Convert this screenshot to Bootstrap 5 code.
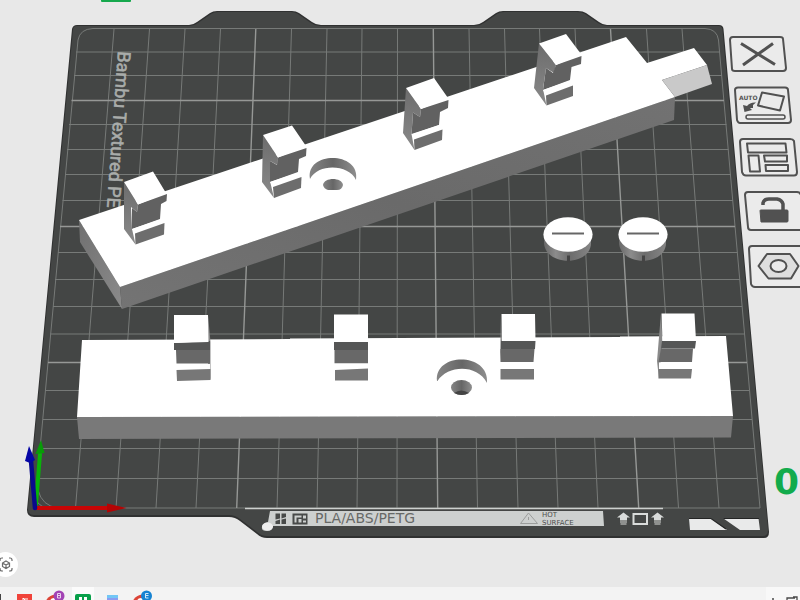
<!DOCTYPE html>
<html lang="en">
<head>
<meta charset="utf-8">
<meta name="viewport" content="width=device-width, initial-scale=1">
<title>Build plate</title>
<link href="https://cdn.jsdelivr.net/npm/bootstrap@5.3.0/dist/css/bootstrap.min.css" rel="stylesheet">
<style>
  body { background: #e8e8e8; font-family: "Liberation Sans", Arial, sans-serif; }
  .plate-name { font: 400 18px Roboto, "Liberation Sans", sans-serif; fill: #a9acaa; stroke: #a9acaa; stroke-width: 0.6; }
  .plate-types { font: 14px "DejaVu Sans", sans-serif; fill: #676967; }
  .plate-warning { font: 7px "DejaVu Sans", sans-serif; fill: #4d4f4d; }
  .plate-number { font: 700 36px "DejaVu Sans", sans-serif; fill: #12ab4c; }
  .auto-label { font: 700 6px "DejaVu Sans", sans-serif; fill: #555; stroke: none; }
  .plate-tools { width: 9.25%; padding-top: 3.75%; }
  .tool-icon { fill: none; stroke: #515151; stroke-width: 2; stroke-linejoin: round; }
  .view-btn { width: 25px; height: 25px; left: -7px; bottom: 10px; }
  .taskbar { height: 13px; background: #f3f3f3; }
  .task-btn { width: 29px; height: 13px; }
  .task-btn svg { overflow: visible; }
  .tray { width: 34px; height: 13px; background: #f8f8f8; }
</style>
<script src="https://cdn.jsdelivr.net/npm/bootstrap@5.3.0/dist/js/bootstrap.bundle.min.js"></script>
</head>
<body class="d-flex flex-column min-vh-100 overflow-hidden">
<main class="position-relative overflow-hidden">
  <svg class="d-block w-100" viewBox="0 0 800 587" role="img" aria-label="Build plate with two rails and two caps">
    <defs>
      <linearGradient id="leftFace" x1="0" y1="0" x2="1" y2="1"><stop offset="0" stop-color="#707070"/><stop offset="1" stop-color="#8b8b8b"/></linearGradient>
      <linearGradient id="postSide" x1="0" y1="0" x2="0" y2="1"><stop offset="0" stop-color="#6c6c6c"/><stop offset="1" stop-color="#8a8a8a"/></linearGradient>
      <linearGradient id="railFront" x1="0" y1="1" x2="1" y2="0"><stop offset="0" stop-color="#747474"/><stop offset=".5" stop-color="#6a6a6a"/><stop offset="1" stop-color="#727272"/></linearGradient>
      <linearGradient id="round" x1="0" y1="0" x2="1" y2="0"><stop offset="0" stop-color="#686868"/><stop offset=".25" stop-color="#8c8c8c"/><stop offset=".55" stop-color="#6c6c6c"/><stop offset="1" stop-color="#858585"/></linearGradient>
      <linearGradient id="hole" x1="0" y1="0" x2="1" y2="0"><stop offset="0" stop-color="#858585"/><stop offset=".5" stop-color="#666"/><stop offset="1" stop-color="#8e8e8e"/></linearGradient>
      <g id="cap">
        <path d="M-24 0V9C-22 32 22 32 23 9V0Z" fill="url(#round)"/>
        <path d="M-1 21h3v7h-3z" fill="#444"/>
        <ellipse rx="24.600" ry="17.300" fill="#fff"/>
        <path d="M-16-1H16" stroke="#666" stroke-width="2"/>
      </g>
    </defs>

    <path d="M101 0h30v1q0 1-1 1h-28q-1 0-1-1z" fill="#16a84d"/>

    <!-- plate body -->
    <path d="M77 25H189Q193 25 197 22L210 13Q213 11 217 11H292Q296 11 299 13L312 22Q316 25 321 25H474Q479 25 483 22L496 13Q499 11 503 11H578Q583 11 586 13L599 22Q603 25 607 25H719Q723 25 723.500 29L769 532Q769 538 764 538H267Q261 538 257 534L240 521Q235 517 229 517H34Q27 517 27 510L72 29Q73 25 77 25Z" fill="#303131"/>
    <path d="M77 26H190Q194 26 198 23L211 14Q214 12 218 12H291Q295 12 298 14L311 23Q315 26 320 26H475Q480 26 484 23L497 14Q500 12 504 12H577Q582 12 585 14L598 23Q602 26 607 26H719Q722 26 722.500 30L768 530Q768 536 763 536H267Q261 536 257 532L240 519Q235 515 229 515H34Q28 515 28 509L73 30Q73 26 77 26Z" fill="#444645"/>

    <!-- grid -->
    <g fill="none" stroke="#777a78" stroke-width="1">
      <path d="M93 28.500H705Q717 29 718.500 40L760 508H48Q34 506 36 492L78 40Q80 29 93 28.500Z"/>
      <path d="M38 490Q42 506 58 508"/>
      <path d="M114 29L75.500 508M149.500 29L116 508M185 29L156 508M220.500 29L196 508M291.500 29L277 508M327 29L317 508M362 29L357 508M397.500 29L397 508M469 29L477.500 508M504.500 29L518 508M539.500 29L558 508M575 29L598 508M646.500 29L678.500 508M682 29L719 508"/>
      <path d="M76 52H720M74 75.500H722M69 124.500H726.500M67 149.500H728.500M65 174.500H731M62.500 200.500H733M58 252.500H737.500M55 279.500H740M53 306.500H742M50 334H745M45 390.500H749M43 419.500H752M40 448.500H755M38 478.500H757"/>
    </g>
    <g fill="none" stroke="#969896" stroke-width="1.400">
      <path d="M255.800 29L236.700 508M433.300 29L437.700 508M610.500 29L638.700 508M71.500 100.500H724M60 226.500H735M48 362.500H747"/>
    </g>
    <path d="M245 508.500H663" stroke="#cdd0ce" stroke-width="1.500"/>

    <text class="plate-name" transform="translate(118 51) rotate(94)">Bambu Textured PETG</text>

    <!-- tilted rail -->
    <path d="M79 220L120 287 122 309 80 242Z" fill="url(#leftFace)"/>
    <path d="M120 287L675 97 674 120 122 309Z" fill="url(#railFront)"/>
    <path d="M79 220L626 37 647 63 694 48 707 65 662 80 675 97 120 287Z" fill="#fff"/>
    <path d="M662 80L707 65 712 84 675 97Z" fill="#c9c9c9"/>
    <path d="M310 179C305 151 361 151 356 180C349 164 318 163 310 179Z" fill="url(#hole)"/>
    <path d="M323 185C324 177 342 177 343 185Q342 190 337 190H328Q324 189 323 185Z" fill="url(#hole)"/>

    <!-- posts of the tilted rail -->
    <g fill="url(#postSide)">
      <path d="M124 182L138 204.500 137 212 131 207 132 229 135.500 244.500 124 229Z"/>
      <path d="M263 135L278 157.500 277.500 165 270 161 270 181 274 198 262 182Z"/>
      <path d="M406 88L421 109 420 117 413 112.500 411.500 134 414.500 150 403 133Z"/>
      <path d="M539 43.500L556 65 554 73 546 68 543 89 546.500 105.500 534 88Z"/>
    </g>
    <g fill="#616161">
      <path d="M138 204.500L167 194 166.500 201 161 204 160 219 132 229 132 208 137 212Z"/>
      <path d="M278 157.500L306.500 148 306 156 299 159 298 172 270 182 270 161 277 165Z"/>
      <path d="M421 109L448.500 100 448 108 440 112 439 125 411.500 134.500 413 112.500 420 117Z"/>
      <path d="M556 65L581.500 56 581 64 571.500 67 570 80 543 90 546 68 553 73Z"/>
    </g>
    <g fill="#fff">
      <path d="M124 182L153 171.500 166 193 138 204.500ZM132 229L163 218.500 164 223 135 233.500Z"/>
      <path d="M263 135L292 125.500 306 146 278 157.500ZM270 182L300 172 301 177 273 187Z"/>
      <path d="M406 88L434 78 448 98 421 109ZM411.500 134L442 124 442 129.500 414 139.500Z"/>
      <path d="M539 43.500L566 34 581 54 556 65ZM543 90L572 80 573 85.500 546 95.500Z"/>
    </g>
    <g fill="#6d6d6d">
      <path d="M135 233.500L164.500 223 164 234.500 135.500 244.500Z"/>
      <path d="M273 187L301.500 177 301 188 274 198Z"/>
      <path d="M414 139.500L442.500 129.500 442 140 414.500 150Z"/>
      <path d="M546 95.500L573 85.500 573 96 546.500 105.500Z"/>
    </g>

    <use href="#cap" x="568" y="234.500"/>
    <use href="#cap" x="643" y="234.500"/>

    <!-- straight rail -->
    <path d="M77 417L733 416 731 437.500 79 439Z" fill="#797979"/>
    <path d="M82 340L290 339V338.500L620 337V336.500L726 336 733 416 77 417Z" fill="#fff"/>
    <path d="M437 381C434 352 490 352 487 383C477 364 448 365 437.500 381Z" fill="url(#hole)"/>
    <ellipse cx="461.500" cy="387.500" rx="10.500" ry="7.500" fill="url(#hole)"/>
    <path d="M454 393Q461 388 469 393Q462 397 454 393Z" fill="#444"/>

    <!-- posts of the straight rail -->
    <path d="M208 315L210.500 342V380L208 370ZM661 313L662.500 341 659 379 657 361ZM501 314L502 342 500 362Z" fill="#8a8a8a"/>
    <g fill="#555656">
      <path d="M174 343L210 341V350H174ZM334 342H368V350H334ZM501 341H535.500L535 349H501ZM662 341H696L695 348.500H661Z"/>
    </g>
    <g fill="#686868">
      <path d="M176 350H210V363.500H176.500ZM334.500 350H368V363.500H334.500ZM500.500 349H534.500L533.500 362H500.500ZM661 348.500H693L692 362H658.500Z"/>
    </g>
    <g fill="#fff">
      <path d="M174 315H208L208.500 342 174 343ZM334 314.500H368V342H334ZM501.500 314H535L535.500 341H502ZM661.500 313.500H694.500L696 341H662.500Z"/>
      <path d="M176 364H210V370H176ZM334 363.500H368V370H334ZM500.500 362.500H534V369H500.500ZM659 362.500H692V369H659Z"/>
    </g>
    <g fill="#777">
      <path d="M176.500 370L210.500 369V380L177 381ZM335 370L368 368.500V380.500H335ZM500.500 369H534V379.500H500.500ZM658.500 369H692L691 378.500H658.500Z"/>
    </g>

    <!-- label strip along the front edge -->
    <path d="M270 511H603L604 526H273Q273 531 267 531T262 527 268 522Z" fill="#cdd0cf"/>
    <ellipse cx="267.500" cy="526.500" rx="5.500" ry="4" fill="#eee"/>
    <g fill="#484a49">
      <path d="M275.500 513.500h4.500v5l-4.500 1zM275.500 521l4.500-1.500v4.500h-4.500zM281.500 513.500h4.500v3.500l-4.500 1.500zM281.500 519.500l4.500-1v5.500h-4.500z"/>
      <path d="M292.500 513.500h15v11h-15zM294.500 515.500v7h2v-5h5v-2zM303 515.500v3h3v-3zM298.500 519v3.500h3V519zM303 520.500v2h3v-2z" fill-rule="evenodd"/>
    </g>
    <text class="plate-types" x="315" y="523">PLA/ABS/PETG</text>
    <path d="M528.500 513L537.500 523.500H520.500ZM528.500 517v3" fill="none" stroke="#9b9d9c" stroke-width="1"/>
    <text class="plate-warning" x="542" y="517">HOT</text>
    <text class="plate-warning" x="542" y="525">SURFACE</text>
    <g fill="#d9dbda">
      <path d="M623.500 512.500L630 517.500H627V520.500H620V517.500H617ZM620 521.500h7v1h-7zM620.500 523.500h6v1h-6z"/>
      <path d="M657.500 512.500L664 517.500H661V520.500H654V517.500H651ZM654 521.500h7v1h-7zM654.500 523.500h6v1h-6z"/>
      <path d="M632.500 513H648V525H632.500ZM634.500 515V523H646V515Z" fill-rule="evenodd"/>
    </g>
    <path d="M689 518.500H711L727 530H690ZM723.500 518.500H758.500L760 530H740Z" fill="#e9eaea"/>
    <path d="M689 518.500H711L726 529M723.500 518.500H759" fill="none" stroke="#242525" stroke-width="1.200"/>

    <!-- axes -->
    <g stroke-linecap="round">
      <path d="M36 504L40 454" stroke="#08b408" stroke-width="4"/>
      <path d="M41 440L44.500 453 35.500 454Z" fill="#079c07"/>
      <path d="M35 508H110" stroke="#c80505" stroke-width="4"/>
      <path d="M107 503.500L126.500 508 107 512.500Z" fill="#b40404"/>
      <path d="M35 508L31 461" stroke="#0a0a8c" stroke-width="4.500"/>
      <path d="M29 446L35 460 30 463 25 461Z" fill="#0505a5"/>
    </g>

    <text class="plate-number" x="774" y="494">0</text>
  </svg>

  <div class="plate-tools position-absolute top-0 end-0 d-flex flex-column">
    <button type="button" class="btn p-0 border-0 rounded-0" aria-label="Remove plate">
      <svg class="tool-icon d-block w-100" viewBox="726 30 74 52">
        <path d="M733 37H780Q783 37 783 39L786 68Q786 71 783 71H735Q732 71 732 69L730 40Q730 37 733 37Z" fill="#ebebeb"/>
        <path d="M741 43.500L775 64.500M773 43.500L743 65" stroke-width="3"/>
      </svg>
    </button>
    <button type="button" class="btn p-0 border-0 rounded-0" aria-label="Auto orient">
      <svg class="tool-icon d-block w-100" viewBox="726 82 74 52">
        <path d="M738 87.500H785Q788 87.500 788 90L791 120Q791 123 788 123H740Q738 123 737 120L735 90Q735 87.500 738 87.500Z" fill="#ebebeb"/>
        <path d="M762 92.500L784 96.500 780 110.500 758 105.500Z"/>
        <rect x="746" y="115" width="39" height="4" rx="2" stroke-width="1.500"/>
        <path d="M743 105L747 106Q750 102 756 102.500L753 105V108L750 108 752 110 744.500 112Z" fill="#515151" stroke="none"/>
        <text class="auto-label" x="739" y="100">AUTO</text>
      </svg>
    </button>
    <button type="button" class="btn p-0 border-0 rounded-0" aria-label="Arrange objects">
      <svg class="tool-icon d-block w-100" viewBox="726 134 74 52">
        <path d="M743 139H790Q793 139 794 141L797 172Q797 175.500 794 175.500H746Q743 175.500 742 172L740 142Q740 139 743 139Z" fill="#ebebeb"/>
        <path d="M747 143.500H785.500L786.500 152.500H748ZM748.500 155.500H758.500L760 171.500H750ZM764 155.500H787V161.500H765ZM765.500 165H788V171H766Z"/>
      </svg>
    </button>
    <button type="button" class="btn p-0 border-0 rounded-0" aria-label="Lock plate">
      <svg class="tool-icon d-block w-100" viewBox="726 186 74 52">
        <path d="M748 192H797Q800 192 801 195L804 230H751Q748 230 748 227L745 195Q745 192 748 192Z" fill="#ebebeb"/>
        <path d="M763 205V203Q764 199 769 199H777Q782 200 783 204V211" stroke-width="3.500"/>
        <path d="M760 210.500Q760 210 761 210H787Q788 210 788 211V221Q788 222 787 222H761Z" fill="#515151" stroke="#515151" stroke-width="1"/>
      </svg>
    </button>
    <button type="button" class="btn p-0 border-0 rounded-0" aria-label="Plate settings">
      <svg class="tool-icon d-block w-100" viewBox="726 238 74 52">
        <path d="M752 246H802V287H755Q752 287 751 284L749 249Q749 246 752 246Z" fill="#ebebeb"/>
        <path d="M758.500 266L767 254H790L798.500 266 791 278.500H768.500Z" fill="#dedede"/>
        <ellipse cx="778.500" cy="266" rx="8" ry="6" fill="#ebebeb"/>
      </svg>
    </button>
  </div>

  <button type="button" class="view-btn btn btn-light bg-white border-0 rounded-circle p-0 position-absolute" aria-label="Reset view">
    <svg class="d-block w-100" viewBox="0 0 25 25" fill="none" stroke="#6c6c6c" stroke-width="1.200">
      <path d="M7 9V8q0-2 2-2h1M16 6h1q2 0 2 2v1M19 16v1q0 2-2 2h-1M10 19H9q-2 0-2-2v-1"/>
      <path d="M13 9L16.500 11V14.500L13 16.500 9.500 14.500V11ZM9.500 11L13 13L16.500 11M13 13V16.500"/>
    </svg>
  </button>
</main>

<footer class="taskbar d-flex flex-grow-1 overflow-hidden">
  <button type="button" class="task-btn btn p-0 border-0 rounded-0" aria-label="Application">
    <svg class="d-block" width="29" height="13"><path d="M0 7h1v6H0z" fill="#444"/><path d="M17 7h15v6H17z" fill="#f0433a"/><path d="M23 13v-2l2 2v-2M27 13v-2" stroke="#fff" fill="none"/></svg>
  </button>
  <button type="button" class="task-btn btn p-0 border-0 rounded-0" aria-label="Browser, profile B">
    <svg class="d-block" width="29" height="13"><path d="M17 14A10 9 0 0 1 32 9L30 14Z" fill="#dc4437"/><circle cx="25" cy="15" r="4" fill="#fff"/><circle cx="30" cy="9" r="5.500" fill="#a344b5"/><path d="M28.500 6.500h3v4.500h-3zM28.500 8.500h3" stroke="#e9d3ee" fill="none"/></svg>
  </button>
  <button type="button" class="task-btn btn p-0 border-0 rounded-0" aria-label="Slicer">
    <svg class="d-block" width="29" height="13"><path d="M14 0h22v13H14z" fill="#fbfbfb"/><circle cx="1" cy="9" r="5.500" fill="none"/><path d="M17 13V9q0-2 2-2h12q2 0 2 2v4Z" fill="#08a04a"/><path d="M21 10h3v3h-3zM26 10h3v3h-3z" fill="#fff"/></svg>
  </button>
  <button type="button" class="task-btn btn p-0 border-0 rounded-0" aria-label="Files">
    <svg class="d-block" width="29" height="13"><path d="M20 8h11v5H20z" fill="#72c6f5"/><path d="M20 11h11v2H20z" fill="#8b9cf0"/></svg>
  </button>
  <button type="button" class="task-btn btn p-0 border-0 rounded-0" aria-label="Browser, profile E">
    <svg class="d-block" width="29" height="13"><path d="M17 14A10 9 0 0 1 32 9L30 14Z" fill="#dc4437"/><circle cx="25" cy="15" r="4" fill="#fff"/><circle cx="30.500" cy="9" r="5.500" fill="#1683d2"/><path d="M32.500 6.500h-3v4.500h3M29.500 8.500h3" stroke="#cde6f8" fill="none"/></svg>
  </button>
  <button type="button" class="tray btn p-0 border-0 rounded-0 ms-auto" aria-label="Notifications">
    <svg class="d-block" width="34" height="13" fill="none" stroke="#484848" stroke-width="1.300"><path d="M21 13v-2h8M27 10h4v3M6 12h2"/></svg>
  </button>
</footer>
</body>
</html>
